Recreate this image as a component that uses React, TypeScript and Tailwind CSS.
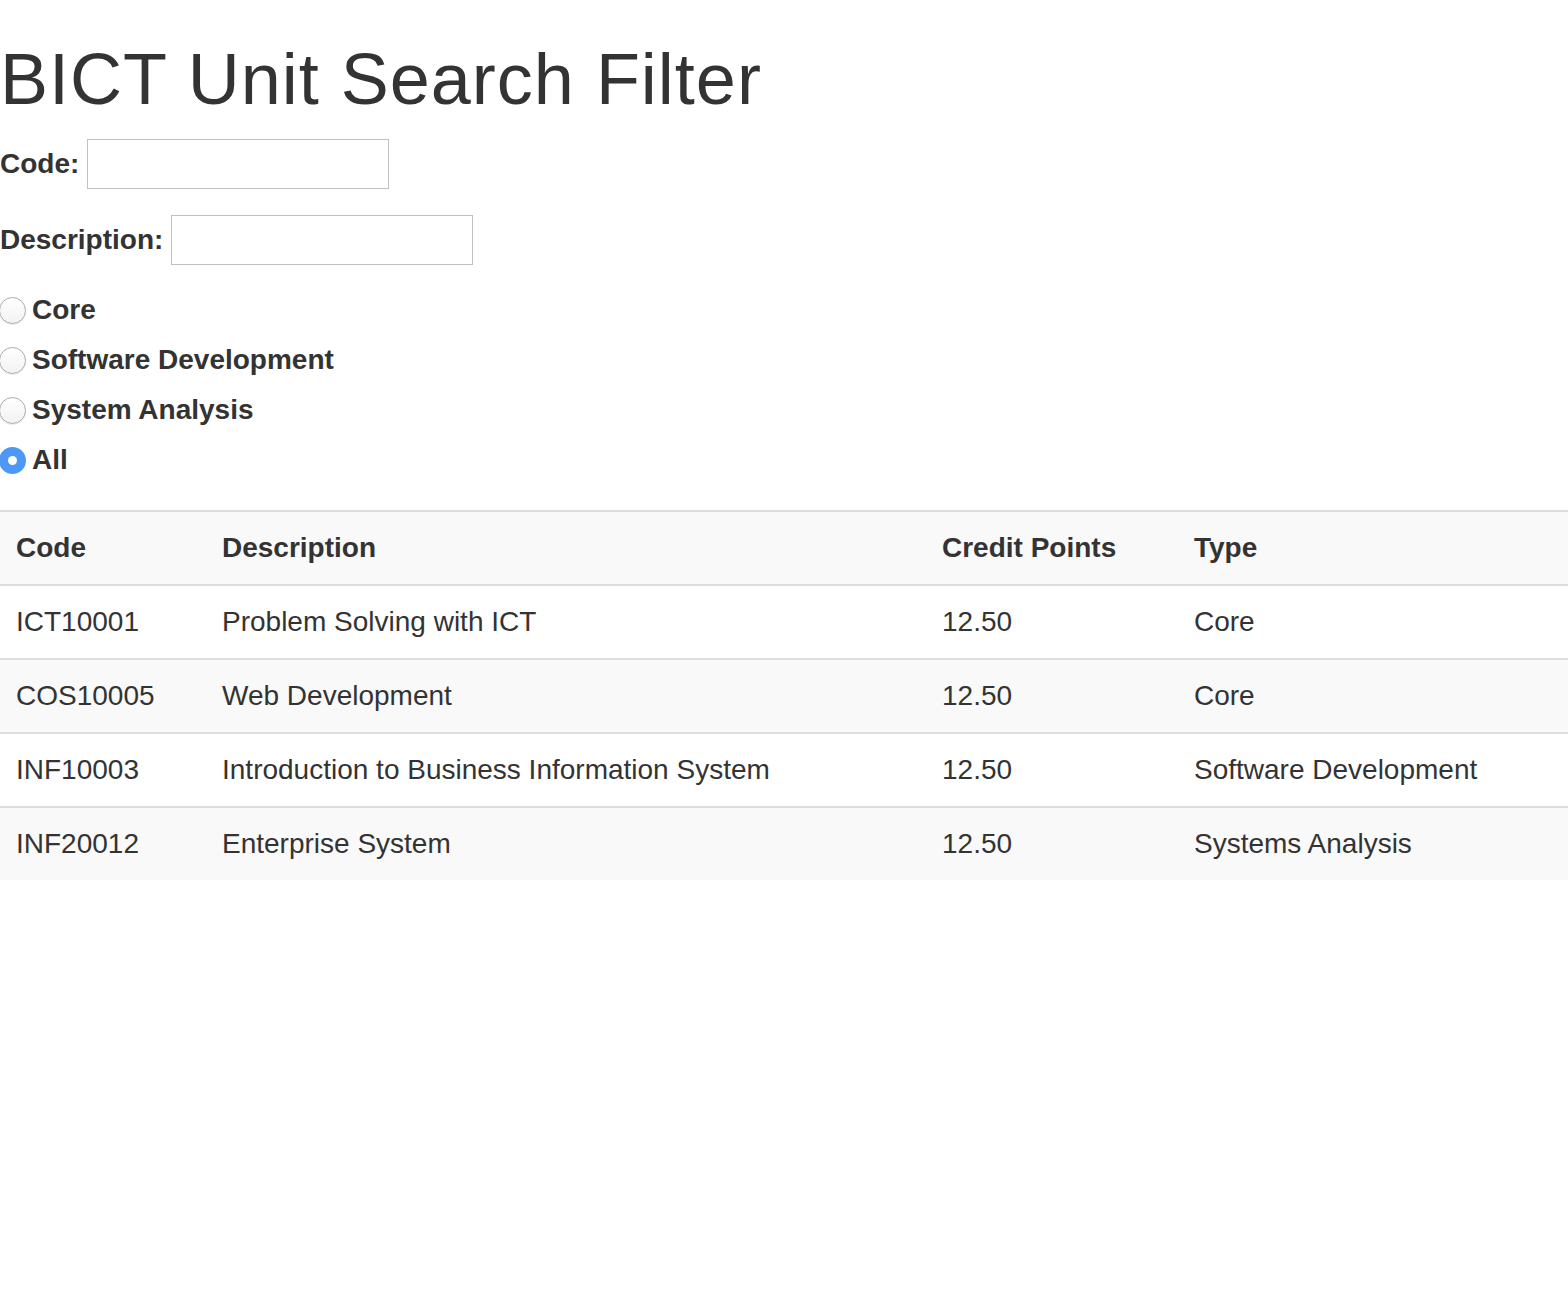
import React from "react";

const rows = [
  { code: "ICT10001", desc: "Problem Solving with ICT", cp: "12.50", type: "Core" },
  { code: "COS10005", desc: "Web Development", cp: "12.50", type: "Core" },
  { code: "INF10003", desc: "Introduction to Business Information System", cp: "12.50", type: "Software Development" },
  { code: "INF20012", desc: "Enterprise System", cp: "12.50", type: "Systems Analysis" },
];

function Radio({ label, checked }: { label: string; checked?: boolean }) {
  return (
    <label className="flex h-[50px] items-center">
      {checked ? (
        <span className="ml-[-1px] flex h-[27px] w-[27px] items-center justify-center rounded-full bg-[#4d98f5]">
          <span className="h-[9px] w-[9px] rounded-full bg-white" />
        </span>
      ) : (
        <span className="ml-[-1px] h-[27px] w-[27px] rounded-full border border-[#aaaaaa] bg-gradient-to-b from-white to-[#f2f2f2] shadow-[0_1px_1px_rgba(0,0,0,0.08)]" />
      )}
      <span className="ml-[6px] text-[28px] font-bold leading-[40px]">{label}</span>
    </label>
  );
}

export default function App() {
  return (
    <div className="min-h-[1294px] bg-white text-[#333333] [font-family:'Liberation_Sans',Arial,sans-serif]">
      <h1 className="pt-[40px] text-[72px] font-normal leading-[79px] tracking-[1px]">BICT Unit Search Filter</h1>
      <div className="mt-[20px] flex h-[50px] items-center">
        <span className="text-[28px] font-bold leading-[40px]">Code:</span>
        <input className="ml-[8px] h-[50px] w-[302px] border border-[#c0c0c0] bg-white outline-none" />
      </div>
      <div className="mt-[26px] flex h-[50px] items-center">
        <span className="text-[28px] font-bold leading-[40px]">Description:</span>
        <input className="ml-[8px] h-[50px] w-[302px] border border-[#c0c0c0] bg-white outline-none" />
      </div>
      <div className="mt-[20px] flex flex-col">
        <Radio label="Core" />
        <Radio label="Software Development" />
        <Radio label="System Analysis" />
        <Radio label="All" checked />
      </div>
      <table className="mt-[25px] w-full table-fixed border-collapse text-[28px] leading-[40px]">
        <colgroup>
          <col className="w-[206px]" />
          <col className="w-[720px]" />
          <col className="w-[252px]" />
          <col />
        </colgroup>
        <thead>
          <tr className="bg-[#f9f9f9]">
            <th className="border-t-2 border-[#dddddd] p-[16px] text-left font-bold">Code</th>
            <th className="border-t-2 border-[#dddddd] p-[16px] text-left font-bold">Description</th>
            <th className="border-t-2 border-[#dddddd] p-[16px] text-left font-bold">Credit Points</th>
            <th className="border-t-2 border-[#dddddd] p-[16px] text-left font-bold">Type</th>
          </tr>
        </thead>
        <tbody>
          {rows.map((r, i) => (
            <tr key={r.code} className={i % 2 === 1 ? "bg-[#f9f9f9]" : "bg-white"}>
              <td className="border-t-2 border-[#dddddd] p-[16px]">{r.code}</td>
              <td className="border-t-2 border-[#dddddd] p-[16px]">{r.desc}</td>
              <td className="border-t-2 border-[#dddddd] p-[16px]">{r.cp}</td>
              <td className="border-t-2 border-[#dddddd] p-[16px]">{r.type}</td>
            </tr>
          ))}
        </tbody>
      </table>
    </div>
  );
}
